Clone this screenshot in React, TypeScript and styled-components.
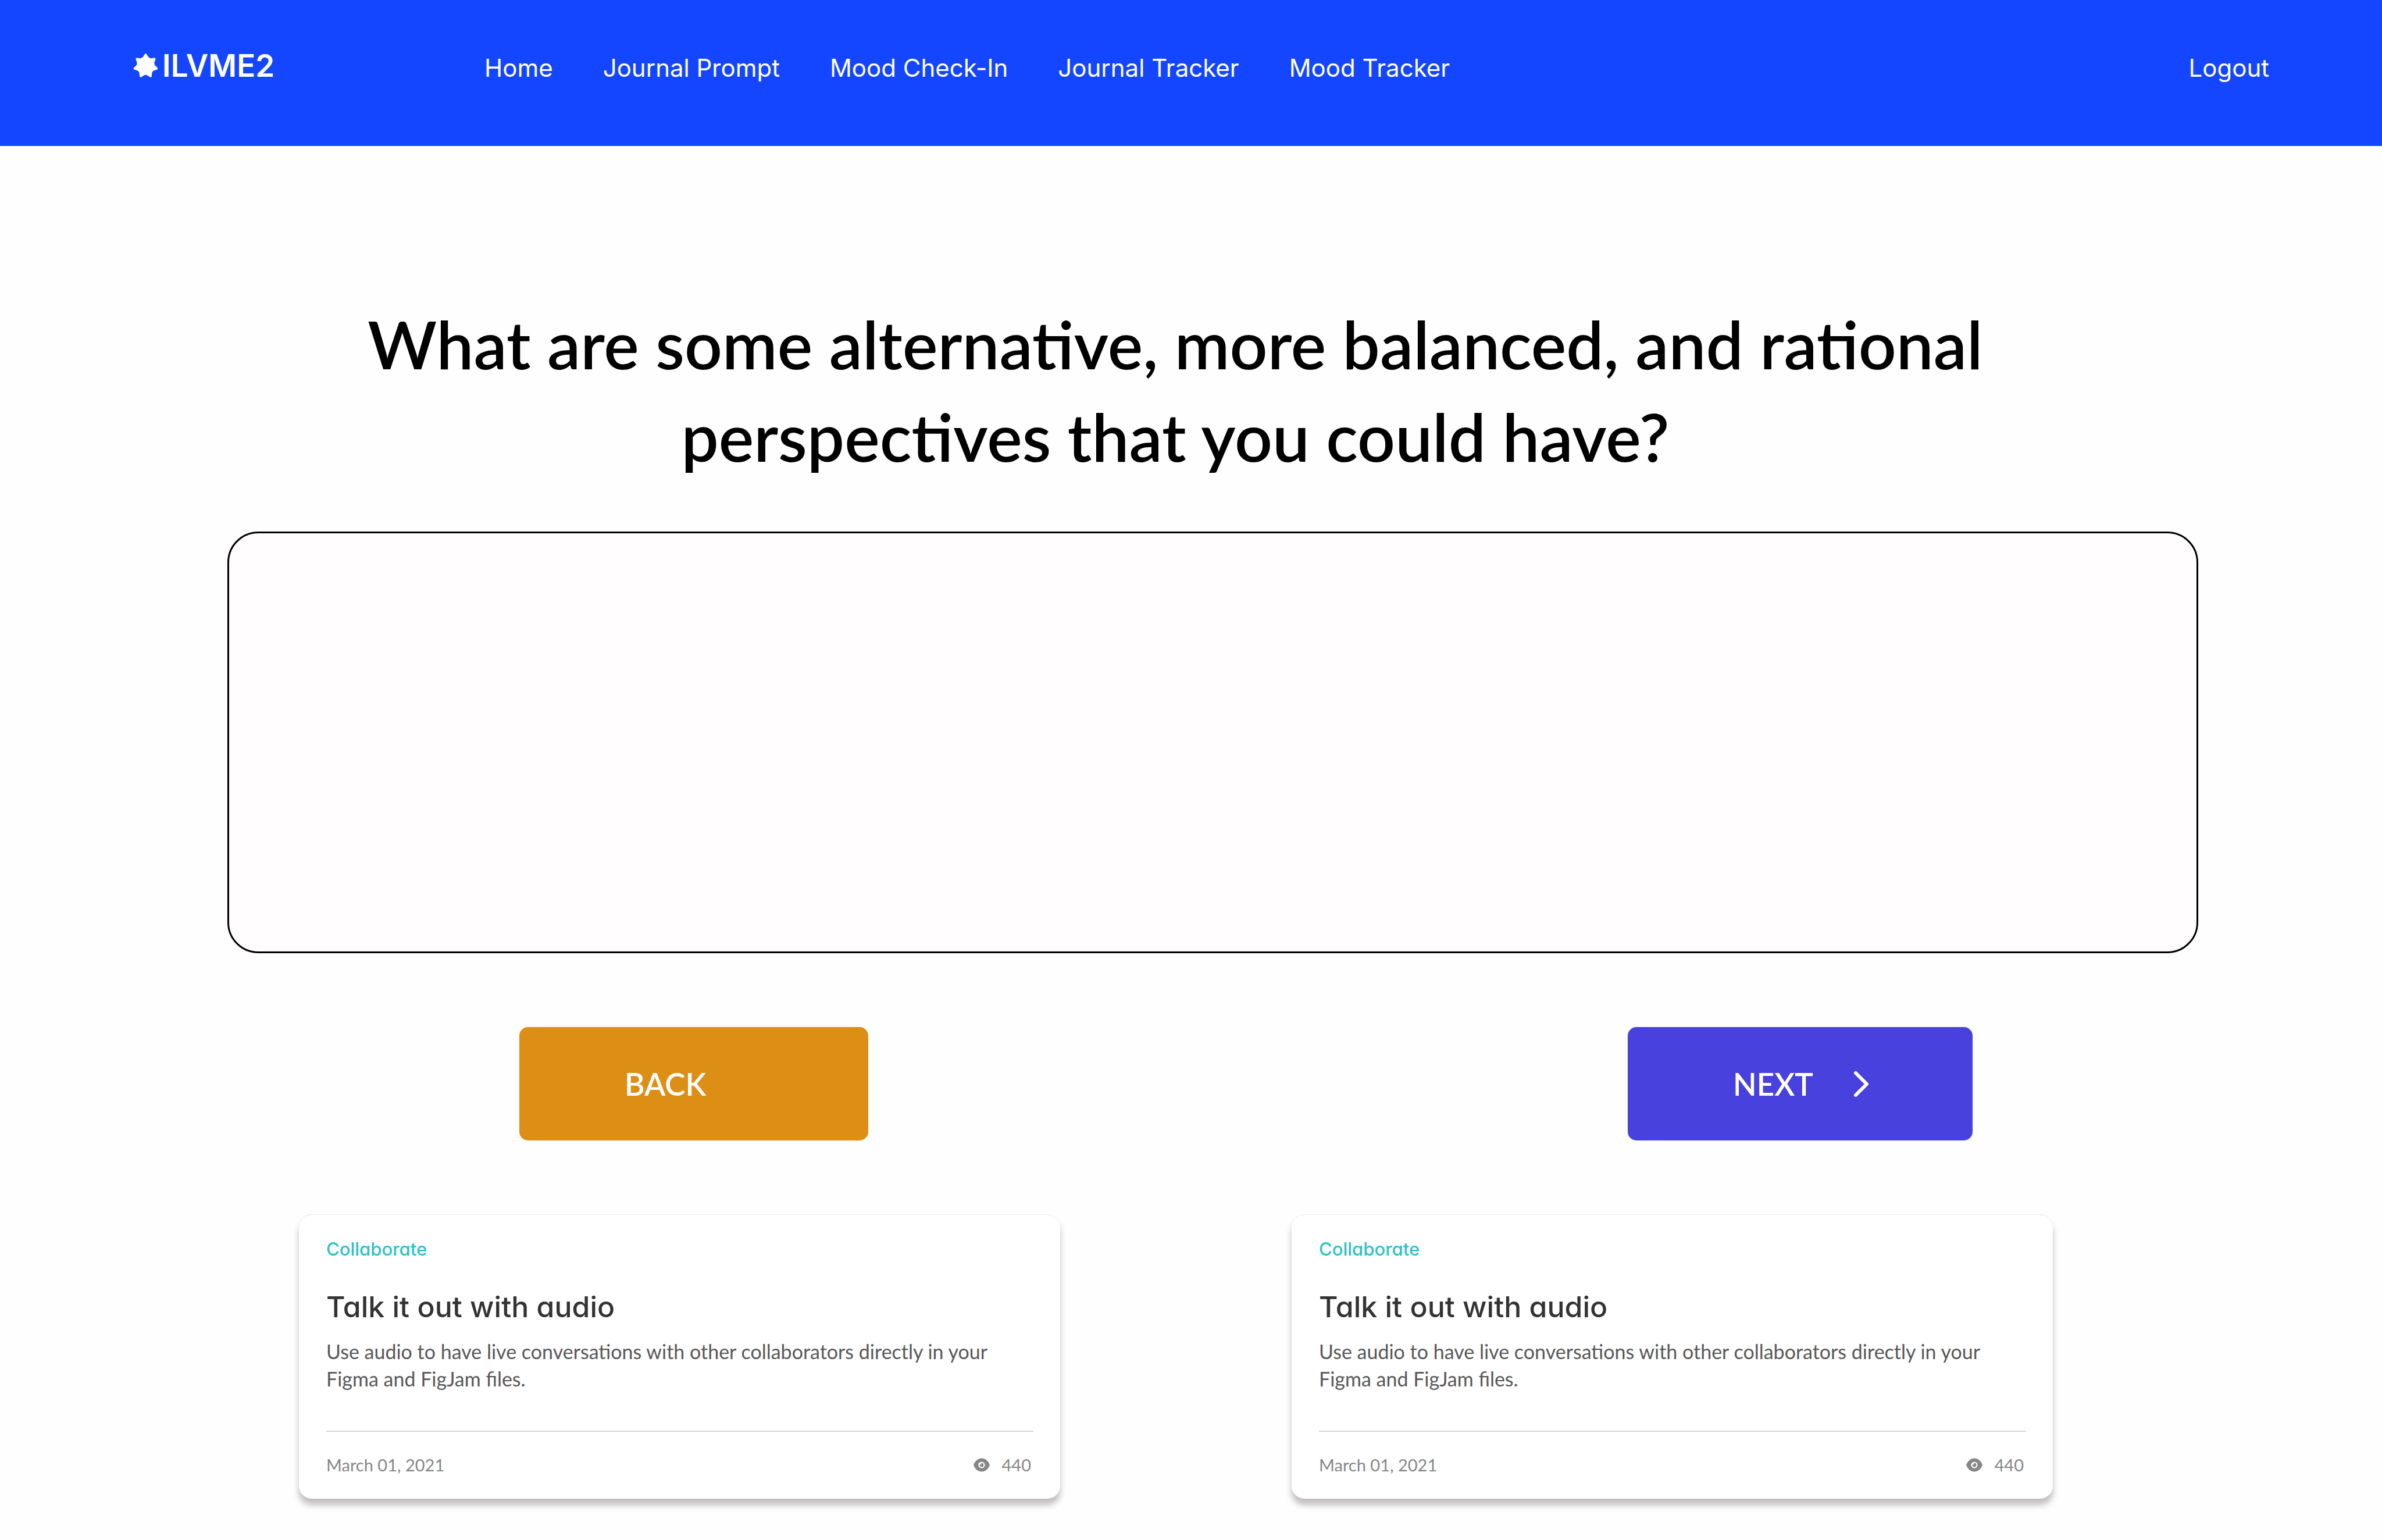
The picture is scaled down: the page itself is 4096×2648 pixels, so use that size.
import React from "react";
import styled, { createGlobalStyle } from "styled-components";

const GlobalStyle = createGlobalStyle`
  *, *::before, *::after { box-sizing: border-box; }
  body {
    margin: 0;
    background: #fefefe;
    font-family: Lato, "Open Sans", sans-serif;
  }
  h1, h2, p { margin: 0; }
`;

const Header = styled.header`
  display: grid;
  grid-template-columns: 604px 1fr auto;
  align-items: baseline;
  padding: 81px 194px 102px 229px;
  background: #1446ff;
  color: #ffffff;
  font-family: Inter, sans-serif;
  line-height: 64px;
`;

const Brand = styled.a`
  display: flex;
  align-items: baseline;
  gap: 7px;
  color: inherit;
  font-size: 53px;
  font-weight: 600;
  text-decoration: none;
`;

const BrandMark = styled.svg`
  align-self: center;
  width: 43px;
  height: 43px;
  fill: currentColor;
`;

const Nav = styled.nav`
  display: flex;
  flex-wrap: wrap;
  column-gap: 86px;
`;

const NavLink = styled.a`
  color: inherit;
  font-size: 42px;
  font-weight: 400;
  text-decoration: none;
`;

const Main = styled.main`
  display: flex;
  flex-direction: column;
  padding: 260px 0 74px;
`;

const Question = styled.h1`
  padding: 0 554px 0 500px;
  color: #000000;
  font-size: 114px;
  font-weight: 600;
  line-height: 159px;
  text-align: center;
`;

const AnswerArea = styled.div`
  display: flex;
  padding: 85px 316px 127px 391px;
`;

const Answer = styled.textarea`
  flex: 1;
  height: 725px;
  padding: 48px;
  border: 3px solid #000000;
  border-radius: 53px;
  background: #fffdfe;
  color: #000000;
  font: 400 52px/64px Lato, sans-serif;
  outline: none;
  resize: none;
`;

const Actions = styled.div`
  display: flex;
  justify-content: space-between;
  padding: 0 704px 127px 893px;
`;

const ActionButton = styled.button<{ $color: string; $width: number }>`
  display: flex;
  align-items: center;
  gap: 69px;
  width: ${(p) => p.$width}px;
  height: 195px;
  padding: 0 181px;
  border: 0;
  border-radius: 15px;
  background: ${(p) => p.$color};
  color: #ffffff;
  font: 600 53px/64px Lato, sans-serif;
  cursor: pointer;
`;

const Chevron = styled.svg`
  flex: none;
  width: 28px;
  height: 46px;
  fill: none;
  stroke: currentColor;
  stroke-width: 6;
  stroke-linecap: round;
  stroke-linejoin: round;
`;

const Cards = styled.section`
  display: grid;
  grid-template-columns: 1fr 1fr;
  column-gap: 398px;
  padding: 0 566px 0 514px;
`;

const Card = styled.article`
  display: flex;
  flex-direction: column;
  padding: 42px 46px 41px 47px;
  border-top: 1px solid #e4e4e4;
  border-radius: 22px;
  background: #ffffff;
  box-shadow: 0 11px 11px rgba(12, 0, 4, 0.25);
`;

const Category = styled.p`
  color: #2dc2c9;
  font: 500 31px/34px Inter, sans-serif;
  font-feature-settings: "cv11";
`;

const CardTitle = styled.h2`
  margin-top: 54px;
  color: #333333;
  font: 500 50px/56px Inter, sans-serif;
  font-feature-settings: "cv11";
`;

const CardText = styled.p`
  margin-top: 25px;
  color: #585858;
  font-size: 34px;
  line-height: 47px;
`;

const CardFooter = styled.footer`
  display: flex;
  justify-content: space-between;
  margin-top: 66px;
  padding-top: 40px;
  border-top: 2px solid #d4d4d4;
  color: #868686;
  font-size: 29px;
  line-height: 34px;
`;

const Views = styled.span`
  display: flex;
  align-items: center;
  gap: 21px;
  padding-right: 4px;
`;

const EyeIcon = styled.svg`
  width: 28px;
  height: 24px;
`;

const links = ["Home", "Journal Prompt", "Mood Check-In", "Journal Tracker", "Mood Tracker"];

const articles = [
  {
    id: "audio-1",
    category: "Collaborate",
    title: "Talk it out with audio",
    text: "Use audio to have live conversations with other collaborators directly in your Figma and FigJam files.",
    date: "March 01, 2021",
    views: 440,
  },
  {
    id: "audio-2",
    category: "Collaborate",
    title: "Talk it out with audio",
    text: "Use audio to have live conversations with other collaborators directly in your Figma and FigJam files.",
    date: "March 01, 2021",
    views: 440,
  },
];

// Seven-pointed star with softly rounded tips.
function starPath(points: number, outer: number, inner: number, round: number) {
  const at = (angle: number, r: number) => [50 + r * Math.sin(angle), 50 - r * Math.cos(angle)];
  const mix = (a: number[], b: number[], t: number) => [a[0] + (b[0] - a[0]) * t, a[1] + (b[1] - a[1]) * t];
  const step = Math.PI / points;
  const vertices = Array.from({ length: points * 2 }, (_, i) => at(i * step, i % 2 ? inner : outer));
  const f = (p: number[]) => `${p[0].toFixed(1)} ${p[1].toFixed(1)}`;
  return (
    vertices
      .map((v, i) => {
        const prev = vertices[(i + vertices.length - 1) % vertices.length];
        const next = vertices[(i + 1) % vertices.length];
        return `${i ? "L" : "M"}${f(mix(v, prev, round))}Q${f(v)} ${f(mix(v, next, round))}`;
      })
      .join("") + "Z"
  );
}

export default function App() {
  return (
    <>
      <GlobalStyle />
      <Header>
        <Brand href="#">
          <BrandMark viewBox="0 0 100 100" aria-hidden="true">
            <path d={starPath(7, 54, 33, 0.35)} />
          </BrandMark>
          <span>ILVME2</span>
        </Brand>
        <Nav>
          {links.map((label) => (
            <NavLink key={label} href="#">
              {label}
            </NavLink>
          ))}
        </Nav>
        <NavLink href="#">Logout</NavLink>
      </Header>
      <Main>
        <Question id="question">
          What are some alternative, more balanced, and rational perspectives that you could have?
        </Question>
        <AnswerArea>
          <Answer aria-labelledby="question" />
        </AnswerArea>
        <Actions>
          <ActionButton type="button" $color="#dd8e15" $width={600}>
            BACK
          </ActionButton>
          <ActionButton type="button" $color="#4841de" $width={593}>
            NEXT
            <Chevron viewBox="0 0 28 46" aria-hidden="true">
              <path d="M4 4L23 23L4 42" />
            </Chevron>
          </ActionButton>
        </Actions>
        <Cards>
          {articles.map((a) => (
            <Card key={a.id}>
              <Category>{a.category}</Category>
              <CardTitle>{a.title}</CardTitle>
              <CardText>{a.text}</CardText>
              <CardFooter>
                <span>{a.date}</span>
                <Views>
                  <EyeIcon viewBox="0 0 28 24" aria-hidden="true">
                    <path
                      d="M0 12C2.500 5 8 0.500 14 0.500S25.500 5 28 12C25.500 19 20 23.500 14 23.500S2.500 19 0 12Z"
                      fill="#868686"
                    />
                    <circle cx="14" cy="12" r="5.600" fill="#ffffff" />
                    <circle cx="14" cy="12" r="3.400" fill="#868686" />
                    <circle cx="12" cy="10" r="1.500" fill="#ffffff" />
                  </EyeIcon>
                  {a.views}
                </Views>
              </CardFooter>
            </Card>
          ))}
        </Cards>
      </Main>
    </>
  );
}
